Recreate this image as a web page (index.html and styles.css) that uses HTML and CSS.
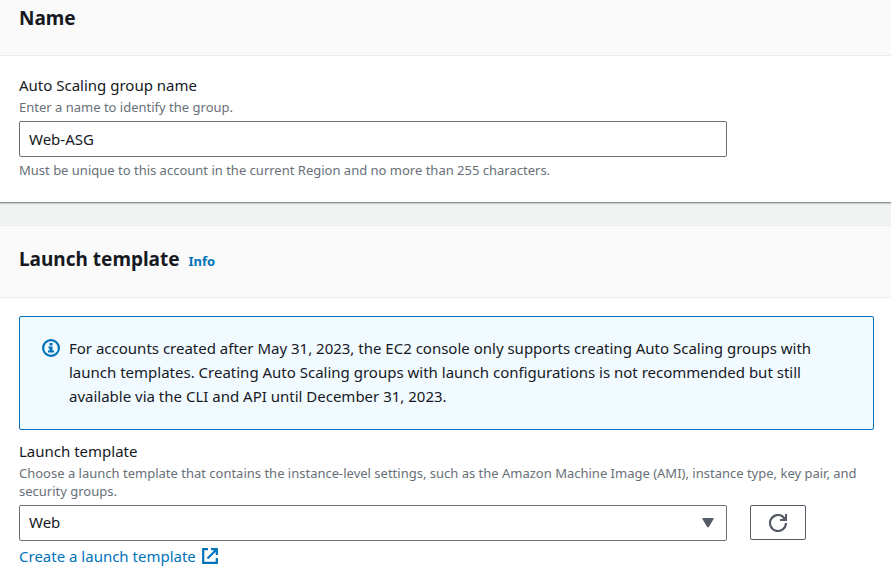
FILE: index.html
```html
<!DOCTYPE html>
<html lang="en">
<head>
<meta charset="utf-8">
<title>Create Auto Scaling group</title>
<link rel="stylesheet" href="styles.css">
</head>
<body>
<main>
  <section class="panel">
    <header class="panel-header first"><h2>Name</h2></header>
    <div class="panel-body">
      <label class="label" for="name">Auto Scaling group name</label>
      <p class="hint" id="name-hint">Enter a name to identify the group.</p>
      <div class="row"><input class="control" id="name" type="text" value="Web-ASG" aria-describedby="name-hint"></div>
      <p class="hint below">Must be unique to this account in the current Region and no more than 255 characters.</p>
    </div>
  </section>
  <section class="panel last">
    <header class="panel-header"><h2>Launch template</h2><a class="info" href="#">Info</a></header>
    <div class="panel-body">
      <div class="alert">
        <svg class="alert-icon" viewBox="0 0 18 18" aria-hidden="true"><circle cx="9" cy="9" r="7.900"/><path class="solid" d="M7.500 4h3v2.500h-3zM6.500 7.500h4v4H12v2H6v-2h1.500v-2h-1z"/></svg>
        <p>For accounts created after May 31, 2023, the EC2 console only supports creating Auto Scaling groups with launch templates. Creating Auto Scaling groups with launch configurations is not recommended but still available via the CLI and API until December 31, 2023.</p>
      </div>
      <label class="label" for="template">Launch template</label>
      <p class="hint">Choose a launch template that contains the instance-level settings, such as the Amazon Machine Image (AMI), instance type, key pair, and security groups.</p>
      <div class="row">
        <div class="select-wrap">
          <select class="control" id="template"><option>Web</option></select>
          <svg class="caret" viewBox="0 0 12 10" aria-hidden="true"><path class="solid" d="M1 0h10q1.300 0 .600 1L7 8.800q-1 1.200-2 0L.4 1Q-.3 0 1 0z"/></svg>
        </div>
        <button class="refresh" type="button" aria-label="Refresh"><svg viewBox="0 0 18 18" aria-hidden="true"><path d="M17 9A8 8 0 1 1 13.500 2.400L16 5"/><path class="solid" d="M16 0h2v7h-7V5h2.500l1-1.500L16 4z"/></svg></button>
      </div>
      <a class="create" href="#">Create a launch template<svg viewBox="0 0 16 16" aria-hidden="true"><path d="M6 1.200H1.200v13.600h13.600V10M9 1.200h5.800V7M14 2L5.500 10.500"/></svg></a>
    </div>
  </section>
</main>
</body>
</html>
```
FILE: styles.css
```css
* { box-sizing: border-box; }
body { margin: 0; background: #f2f3f3; color: #16191f; font: 15px/24px "Noto Sans", sans-serif; }
main { display: flex; flex-direction: column; min-height: 100vh; }
h2, p { margin: 0; }
a { color: #0073bb; text-decoration: none; }
.panel { background: #fff; border-bottom: 1px solid #879596; box-shadow: 0 1px 1px #c9d0d0; margin-bottom: 22px; }
.panel.last { flex: 1; margin-bottom: 0; border-bottom: 0; }
.panel-header { display: flex; align-items: baseline; gap: 9px; padding: 19px 19px 24px; background: #fafafa; border-top: 1px solid #eaeded; border-bottom: 1px solid #eaeded; }
.panel-header.first { padding-top: 4px; padding-bottom: 23px; border-top: 0; }
h2 { font-size: 19px; line-height: 28px; font-weight: 700; }
.info { font-size: 13px; font-weight: 700; }
.panel-body { padding: 18px 17px 23px 19px; }
.last .panel-body { padding-bottom: 4px; }
.label { display: block; line-height: 22px; margin-bottom: 2px; }
.hint { font-size: 13px; line-height: 18px; color: #687078; }
.row { display: flex; gap: 23px; margin-top: 5px; padding-right: 68px; }
.control { flex: 1; width: 100%; height: 36px; margin: 0; padding: 0 9px; border: 1px solid #687078; border-radius: 2px; background: #fff; color: #16191f; font: inherit; appearance: none; }
select.control { display: block; padding-bottom: 3px; }
.row > .control { margin-right: 79px; }
.below { margin-top: 4px; }
.alert { display: flex; gap: 9px; padding: 19px 22px 21px; margin-bottom: 10px; border: 1px solid #0073bb; border-radius: 2px; background: #f1faff; }
.alert-icon { flex: none; width: 18px; height: 18px; margin-top: 3px; }
svg path, svg circle { fill: none; stroke: currentColor; stroke-width: 2.2; }
svg .solid { fill: currentColor; stroke: none; }
.alert-icon, .create svg { color: #0073bb; }
.select-wrap { position: relative; flex: 1; }
.caret { position: absolute; right: 13px; top: 13px; width: 12px; height: 10px; color: #545b64; pointer-events: none; }
.refresh { width: 56px; height: 35px; padding: 0; border: 1px solid #545b64; border-radius: 2px; background: #fff; color: #545b64; display: grid; place-items: center; }
.refresh svg { width: 18px; height: 18px; }
.create { display: inline-flex; align-items: center; gap: 6px; margin-top: 3px; }
.create svg { width: 16px; height: 16px; }
```
